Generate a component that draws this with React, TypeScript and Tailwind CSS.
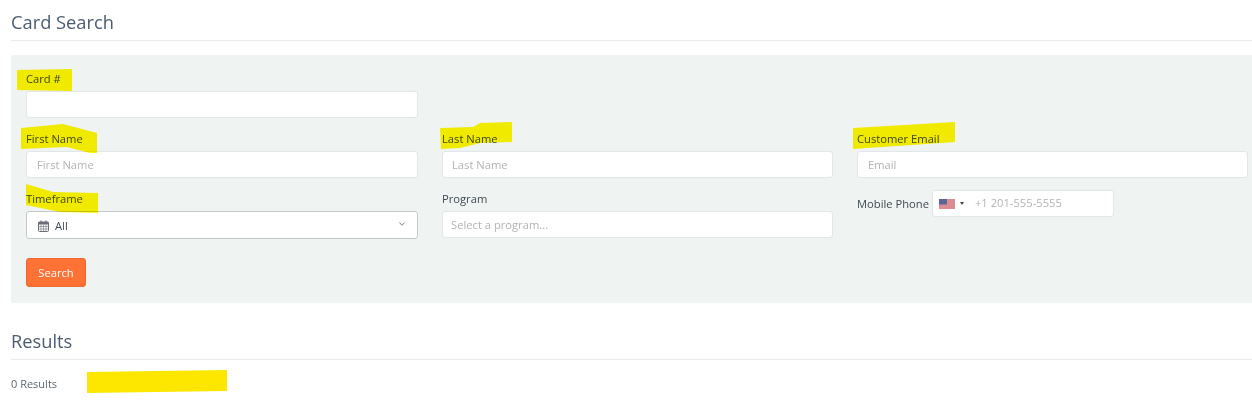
import { ChevronDown } from 'lucide-react';

const labelClass = 'mb-[4px] block text-[11.2px] leading-[16px] text-[#3f4a54]';

function Field({
  label,
  placeholder,
  inputPad = 'pl-[10px]',
}: {
  label: string;
  placeholder?: string;
  inputPad?: string;
}) {
  return (
    <div>
      <label className={labelClass}>{label}</label>
      <input
        className={`h-[27px] w-full rounded-[3px] border border-[#e3e6e8] bg-white pr-[10px] text-[11.2px] text-[#3f4a54] outline-none placeholder:text-[#b3b3b3] ${inputPad}`}
        placeholder={placeholder}
      />
    </div>
  );
}

function CalendarIcon() {
  return (
    <svg width="11" height="12" viewBox="0 0 11 12" className="text-[#6b6f75]">
      <rect x="0.5" y="2" width="10" height="9.5" rx="1" fill="none" stroke="currentColor" />
      <rect x="0.5" y="2" width="10" height="2.5" fill="currentColor" />
      <path d="M3 0.5v2.5M8 0.5v2.5" stroke="currentColor" strokeWidth="1.2" />
      <path d="M0.5 6.5h10M0.5 9h10M3 4.5v7M5.5 4.5v7M8 4.5v7" stroke="currentColor" strokeWidth="0.6" />
    </svg>
  );
}

function UsFlag() {
  return (
    <svg width="16" height="10" viewBox="0 0 16 10">
      <rect width="16" height="10" fill="#eab0b2" />
      <path d="M0 1h16M0 3h16M0 5h16M0 7h16M0 9h16" stroke="#cf6a70" strokeWidth="1" />
      <rect width="8" height="5.5" fill="#5a659a" />
    </svg>
  );
}

function Highlights() {
  const marks = [
    '17,70 72,69 72,91 17,90',
    '21,128 63,124 97,133 97,153 90,153 67,147 21,149',
    '26,184 53,192 98,193 98,213 60,212 26,205',
    '440,128 473,127 480,123 512,122 512,142 480,143 460,148 441,149',
    '853,128 955,122 955,142 853,149',
  ];
  return (
    <svg width="1252" height="409" className="pointer-events-none absolute left-0 top-0 mix-blend-multiply">
      {marks.map((points) => (
        <polygon key={points} points={points} fill="#fff600" />
      ))}
      <polygon points="87,372 227,370 227,391 87,393" fill="#fde600" />
    </svg>
  );
}

export default function App() {
  return (
    <div className="relative h-[409px] w-[1252px] overflow-hidden bg-white pl-[11px] font-['Open_Sans',sans-serif]">
      {/* Search */}
      <h2 className="flex h-[41px] items-end border-b border-[#e8eaec] pb-[5px] text-[18.3px] leading-[26px] text-[#4b5b70]">
        Card Search
      </h2>

      <div className="mt-[14px] h-[248px] rounded-l-[2px] bg-[#eff3f2] pl-[15px] pt-[16px]">
        <div className="grid grid-cols-[392px_391px_391px] gap-x-[24px] gap-y-[13px]">
          <Field label="Card #" />
          <div className="col-span-2" />

          <Field label="First Name" placeholder="First Name" />
          <Field label="Last Name" placeholder="Last Name" inputPad="pl-[9px]" />
          <Field label="Customer Email" placeholder="Email" />

          <div>
            <label className={labelClass}>Timeframe</label>
            <div className="flex h-[28px] items-center rounded-[3px] border border-[#c6c9cb] bg-white pl-[11px] pr-[10px] pt-[2px] text-[11.2px] text-[#3f4a54]">
              <CalendarIcon />
              <span className="ml-[6px] mt-[1px]">All</span>
              <ChevronDown className="ml-auto mb-[4px] h-[10px] w-[10px] text-[#5f6f80]" />
            </div>
          </div>
          <Field label="Program" placeholder="Select a program..." inputPad="pl-[8px]" />
          <div className="-mt-[1px] flex h-[27px] items-center">
            <span className="mt-[1px] text-[11.2px] text-[#3f4a54]">Mobile Phone</span>
            <div className="ml-[3px] flex h-[27px] w-[182px] items-center rounded-[3px] border border-[#e3e6e8] bg-white pl-[6px]">
              <UsFlag />
              <span className="ml-[5px] h-0 w-0 border-x-[2.5px] border-t-[3px] border-x-transparent border-t-[#444]" />
              <input
                className="ml-[11px] w-[120px] text-[11.2px] text-[#3f4a54] outline-none placeholder:text-[#b3b3b3]"
                placeholder="+1 201-555-5555"
              />
            </div>
          </div>
        </div>

        <button className="mt-[19px] block h-[29px] w-[60px] rounded-[3px] border border-[#f06a30] bg-[#ff7236] pt-[1px] text-[11.2px] text-white">
          Search
        </button>
      </div>

      {/* Results */}
      <h2 className="mt-[24px] flex h-[33px] items-end border-b border-[#e8eaec] pb-[5px] text-[18.3px] leading-[26px] text-[#4b5b70]">
        Results
      </h2>
      <p className="mt-[16px] text-[11px] leading-[16px] text-[#5d6770]">0 Results</p>

      <Highlights />
    </div>
  );
}
